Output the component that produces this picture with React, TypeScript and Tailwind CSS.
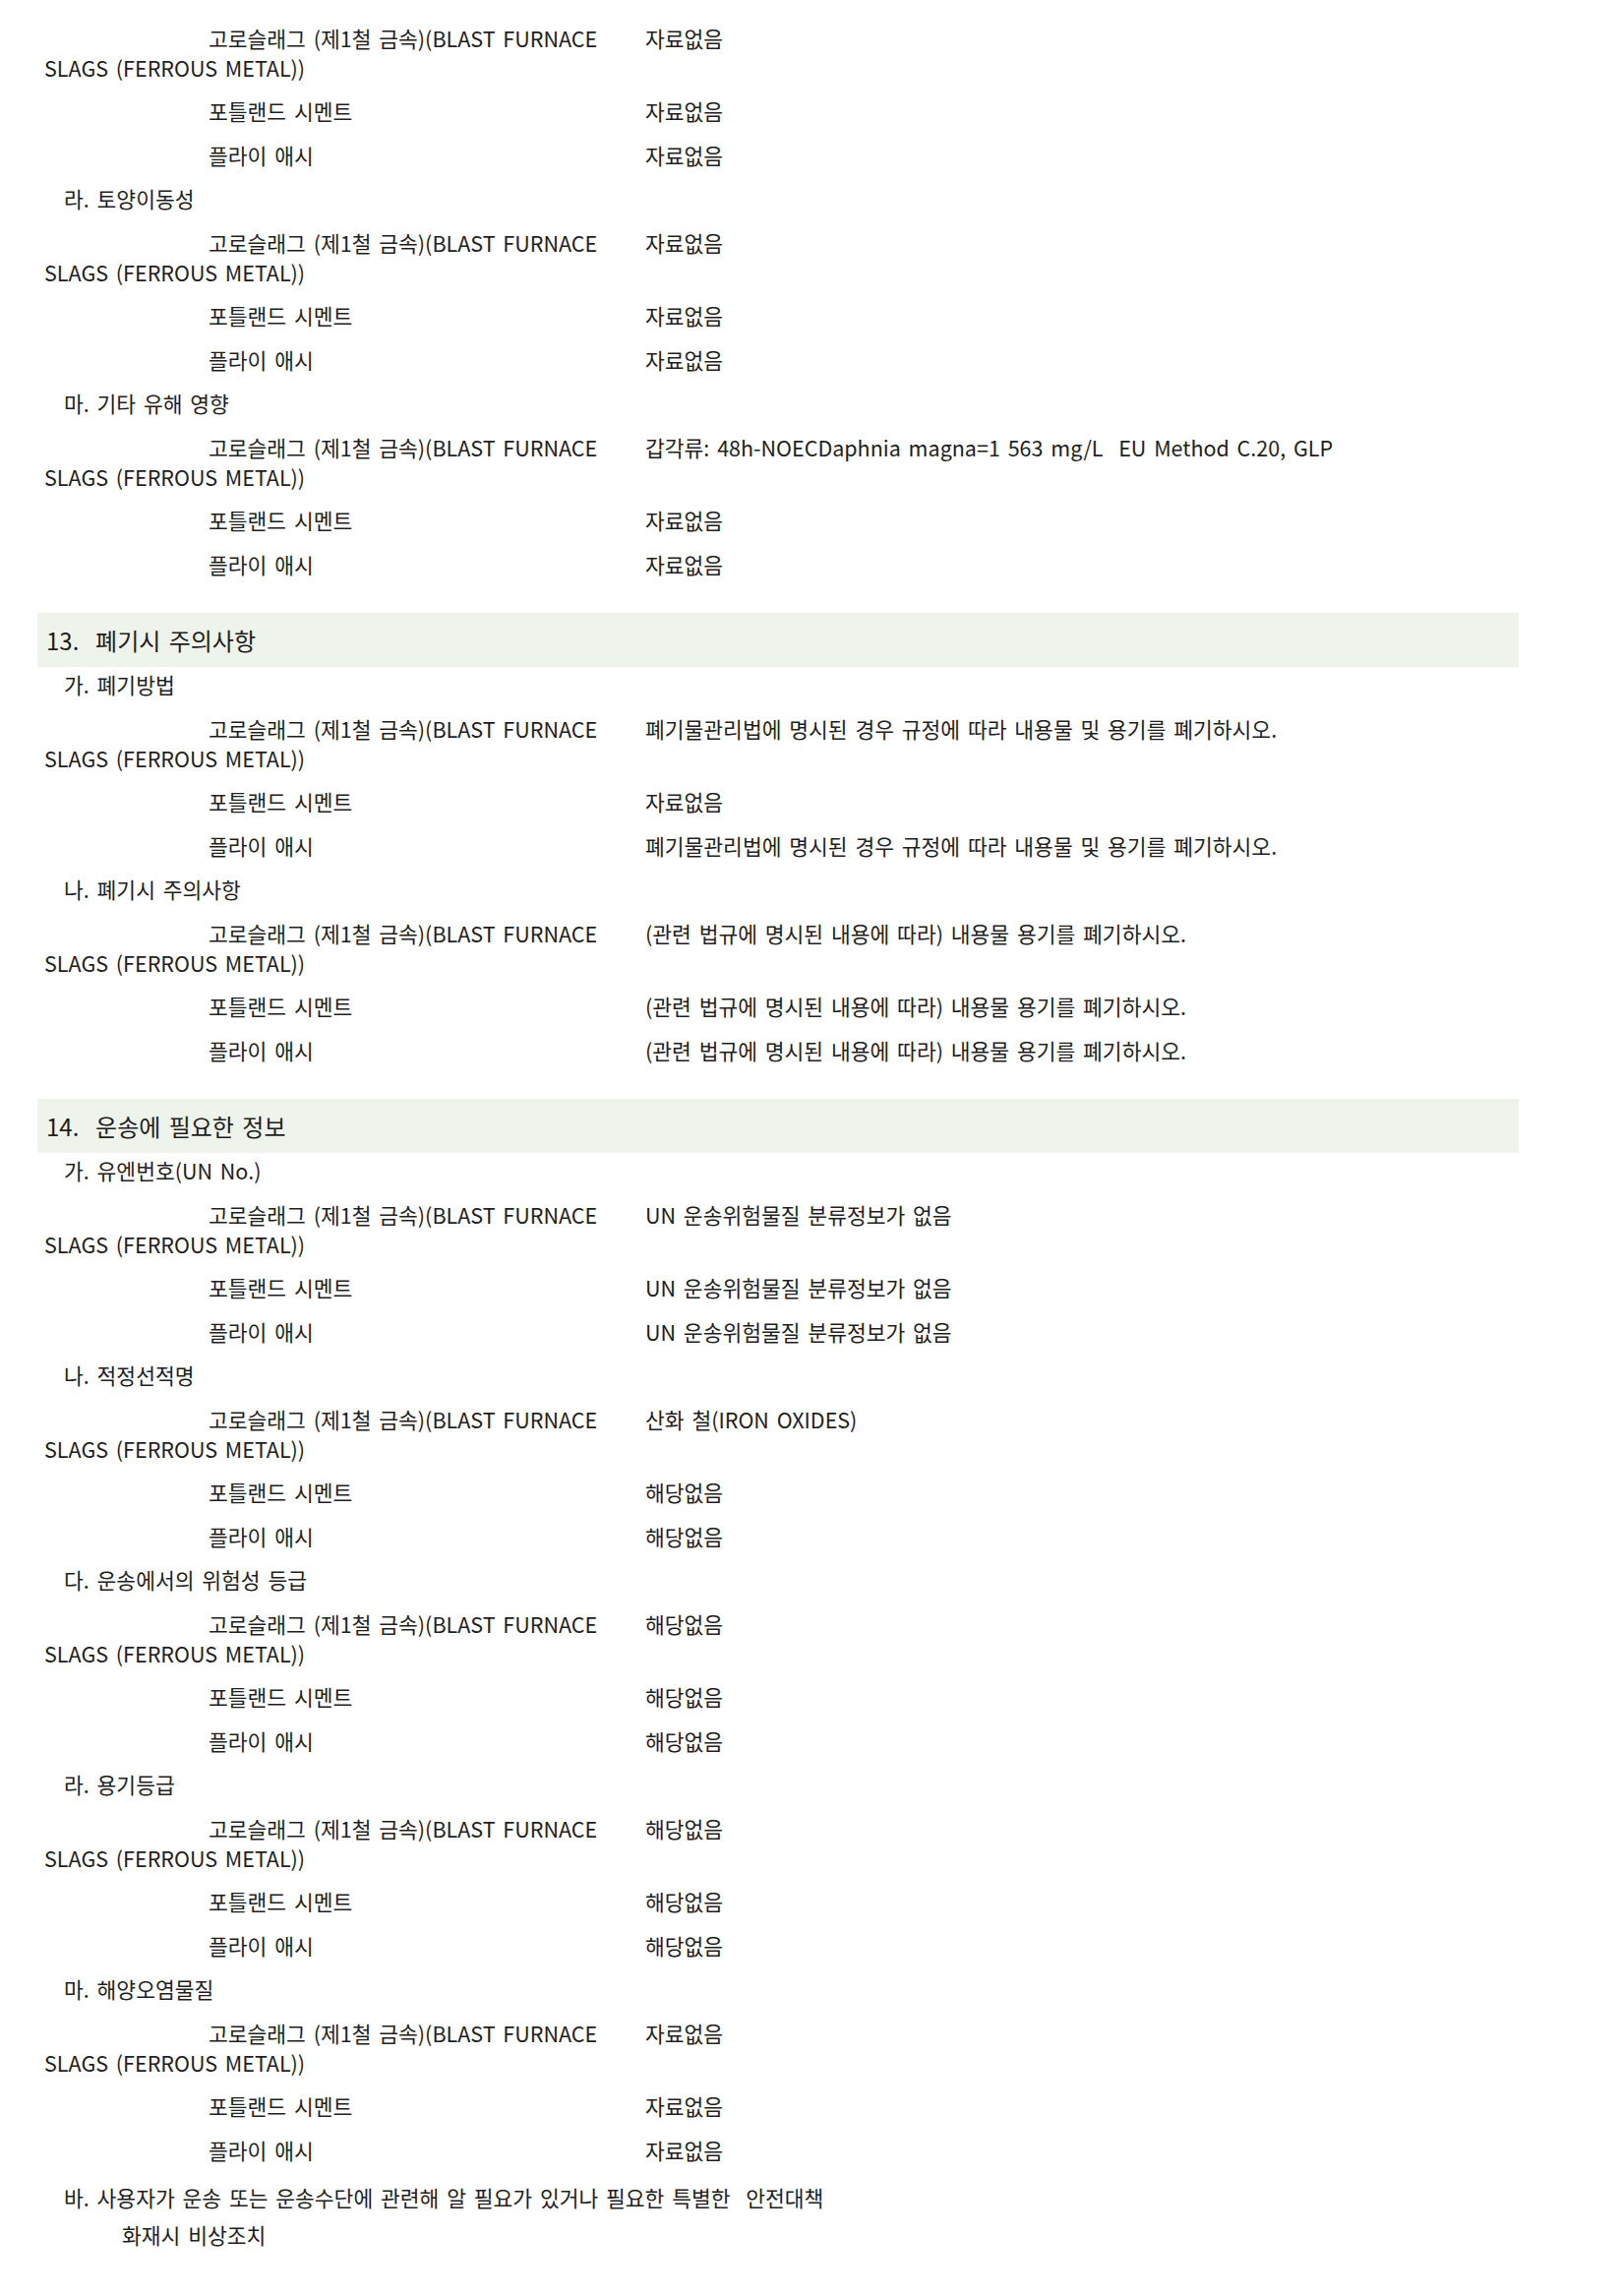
import React from "react";

type Group = { label?: string; values: [string, string, string] };
type Section = { title?: string; groups: Group[] };

const sections: Section[] = [
  {
    groups: [
      { values: ["자료없음", "자료없음", "자료없음"] },
      { label: "라. 토양이동성", values: ["자료없음", "자료없음", "자료없음"] },
      {
        label: "마. 기타 유해 영향",
        values: ["갑각류: 48h-NOECDaphnia magna=1 563 mg/L  EU Method C.20, GLP", "자료없음", "자료없음"],
      },
    ],
  },
  {
    title: "13.  폐기시 주의사항",
    groups: [
      {
        label: "가. 폐기방법",
        values: [
          "폐기물관리법에 명시된 경우 규정에 따라 내용물 및 용기를 폐기하시오.",
          "자료없음",
          "폐기물관리법에 명시된 경우 규정에 따라 내용물 및 용기를 폐기하시오.",
        ],
      },
      {
        label: "나. 폐기시 주의사항",
        values: [
          "(관련 법규에 명시된 내용에 따라) 내용물 용기를 폐기하시오.",
          "(관련 법규에 명시된 내용에 따라) 내용물 용기를 폐기하시오.",
          "(관련 법규에 명시된 내용에 따라) 내용물 용기를 폐기하시오.",
        ],
      },
    ],
  },
  {
    title: "14.  운송에 필요한 정보",
    groups: [
      {
        label: "가. 유엔번호(UN No.)",
        values: ["UN 운송위험물질 분류정보가 없음", "UN 운송위험물질 분류정보가 없음", "UN 운송위험물질 분류정보가 없음"],
      },
      { label: "나. 적정선적명", values: ["산화 철(IRON OXIDES)", "해당없음", "해당없음"] },
      { label: "다. 운송에서의 위험성 등급", values: ["해당없음", "해당없음", "해당없음"] },
      { label: "라. 용기등급", values: ["해당없음", "해당없음", "해당없음"] },
      { label: "마. 해양오염물질", values: ["자료없음", "자료없음", "자료없음"] },
    ],
  },
];

function Row({ name, value, wrap }: { name: string; value: string; wrap?: string }) {
  return (
    <div className="flex py-[7.25px] leading-[30px]">
      <div className="w-[611px] shrink-0">
        <div className="pl-[167px]">{name}</div>
        {wrap && <div>{wrap}</div>}
      </div>
      <div className="whitespace-pre">{value}</div>
    </div>
  );
}

function GroupBlock({ group }: { group: Group }) {
  return (
    <div>
      {group.label && <div className="py-[7.25px] pl-[20px] leading-[30px]">{group.label}</div>}
      <Row name="고로슬래그 (제1철 금속)(BLAST FURNACE" wrap="SLAGS (FERROUS METAL))" value={group.values[0]} />
      <Row name="포틀랜드 시멘트" value={group.values[1]} />
      <Row name="플라이 애시" value={group.values[2]} />
    </div>
  );
}

export default function App() {
  return (
    <div
      className="min-h-[2334px] w-[1648px] bg-white pt-[16.5px] text-[21.5px] text-[#1e1e1e] [word-spacing:3px]"
      style={{ fontFamily: '"Noto Sans CJK KR", "Noto Sans", sans-serif' }}
    >
      {sections.map((section, i) => (
        <div key={i}>
          {section.title && (
            <div className="ml-[38px] mt-[27px] -mb-[4px] flex h-[55px] w-[1506px] items-center whitespace-pre bg-[#eef4ec] pl-[9px] text-[24px]">
              {section.title}
            </div>
          )}
          <div className="pl-[45px]">
            {section.groups.map((g, j) => (
              <GroupBlock key={j} group={g} />
            ))}
          </div>
        </div>
      ))}
      <div className="pl-[45px]">
        <div className="whitespace-pre pl-[20px] pt-[11px] leading-[30px]">
          바. 사용자가 운송 또는 운송수단에 관련해 알 필요가 있거나 필요한 특별한  안전대책
        </div>
        <div className="mt-[8px] pl-[79px] leading-[30px]">화재시 비상조치</div>
      </div>
    </div>
  );
}
